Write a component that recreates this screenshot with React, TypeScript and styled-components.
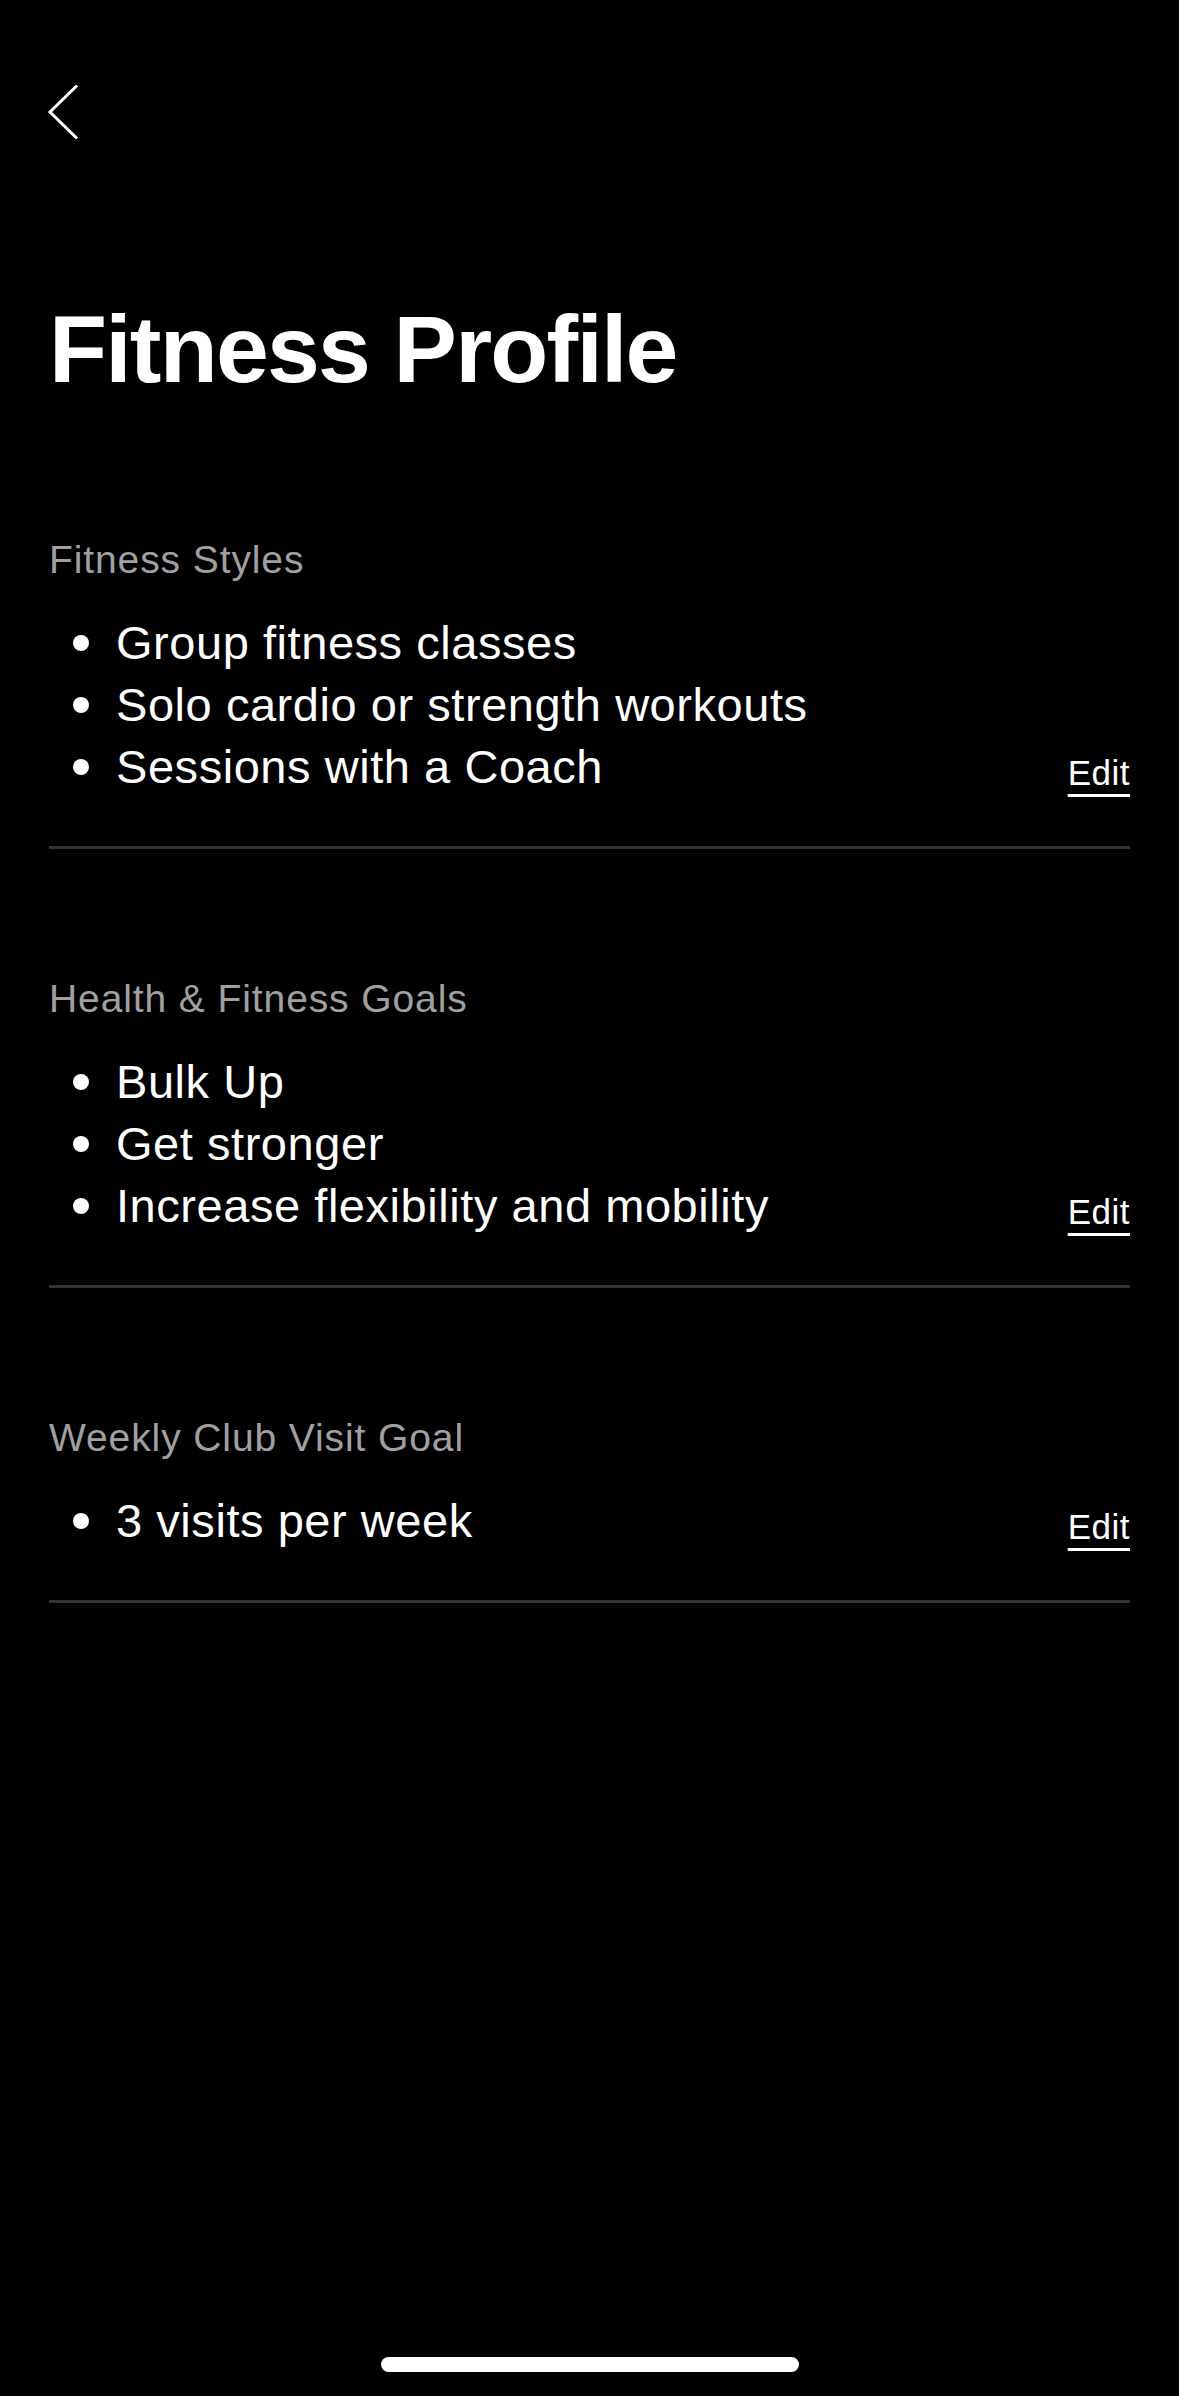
import styled, { createGlobalStyle } from "styled-components";

const GlobalStyle = createGlobalStyle`
    html, body {
        margin: 0;
        padding: 0;
        background: #000;
    }
    body {
        font-family: "Liberation Sans", Arial, Helvetica, sans-serif;
        color: #fff;
    }
`

const Tela = styled.main`
    min-height: 100vh;
    display: flex;
    flex-direction: column;
    padding: 0 49px;
    box-sizing: border-box;
`

const Topo = styled.header`
    padding-top: 84px;
    height: 56px;
    margin-left: -2px;
`

const BotaoVoltar = styled.button`
    background: none;
    border: none;
    padding: 0;
    width: 34px;
    height: 56px;
    cursor: pointer;
    display: block;

    svg {
        display: block;
    }
`

const Titulo = styled.h1`
    margin: 162px 0 0;
    font-size: 95px;
    line-height: 95px;
    font-weight: 700;
    letter-spacing: -1.8px;
    color: #fff;
`

const Secoes = styled.div`
    display: flex;
    flex-direction: column;
    padding-top: 139px;
    gap: 126px;
`

const Secao = styled.section`
    display: flex;
    flex-direction: column;
    border-bottom: 3px solid #333;
`

const Rotulo = styled.h2`
    margin: 0 0 28px;
    font-size: 39px;
    line-height: 48px;
    font-weight: 400;
    letter-spacing: 0.9px;
    color: #a0a0a0;
`

const Corpo = styled.div`
    display: flex;
    justify-content: space-between;
    align-items: flex-end;
    padding-bottom: 48px;
`

const Lista = styled.ul`
    list-style: none;
    margin: 0;
    padding: 0;
`

const Item = styled.li`
    display: flex;
    align-items: center;
    gap: 27px;
    padding-left: 24px;
    font-size: 47px;
    line-height: 62px;
    letter-spacing: 0.55px;
    color: #fff;

    &::before {
        content: "";
        width: 16px;
        height: 16px;
        border-radius: 50%;
        background: #fff;
        flex-shrink: 0;
    }
`

const Editar = styled.a`
    font-size: 35px;
    line-height: 50px;
    letter-spacing: 0.5px;
    color: #fff;
    text-decoration: underline;
    text-decoration-thickness: 3px;
    text-underline-offset: 9px;
    cursor: pointer;
`

const Rodape = styled.div`
    margin-top: auto;
    display: flex;
    justify-content: center;
    padding-bottom: 24px;
`

const BarraHome = styled.div`
    width: 418px;
    height: 15px;
    border-radius: 8px;
    background: #fff;
`

const secoes = [
    {
        titulo: "Fitness Styles",
        itens: ["Group fitness classes", "Solo cardio or strength workouts", "Sessions with a Coach"],
    },
    {
        titulo: "Health & Fitness Goals",
        itens: ["Bulk Up", "Get stronger", "Increase flexibility and mobility"],
    },
    {
        titulo: "Weekly Club Visit Goal",
        itens: ["3 visits per week"],
    },
]

const App = () => {
    return (
        <>
            <GlobalStyle />
            <Tela>
                <Topo>
                    <BotaoVoltar aria-label="Back">
                        <svg width="34" height="56" viewBox="0 0 34 56">
                            <path d="M30 1.5 L3 28 L30 54.5" fill="none" stroke="#fff" strokeWidth="3" strokeLinecap="butt" strokeLinejoin="miter" />
                        </svg>
                    </BotaoVoltar>
                </Topo>

                <Titulo>Fitness Profile</Titulo>

                <Secoes>
                    {secoes.map((secao) => (
                        <Secao key={secao.titulo}>
                            <Rotulo>{secao.titulo}</Rotulo>
                            <Corpo>
                                <Lista>
                                    {secao.itens.map((item) => (
                                        <Item key={item}>{item}</Item>
                                    ))}
                                </Lista>
                                <Editar>Edit</Editar>
                            </Corpo>
                        </Secao>
                    ))}
                </Secoes>

                <Rodape>
                    <BarraHome />
                </Rodape>
            </Tela>
        </>
    )
}

export default App
